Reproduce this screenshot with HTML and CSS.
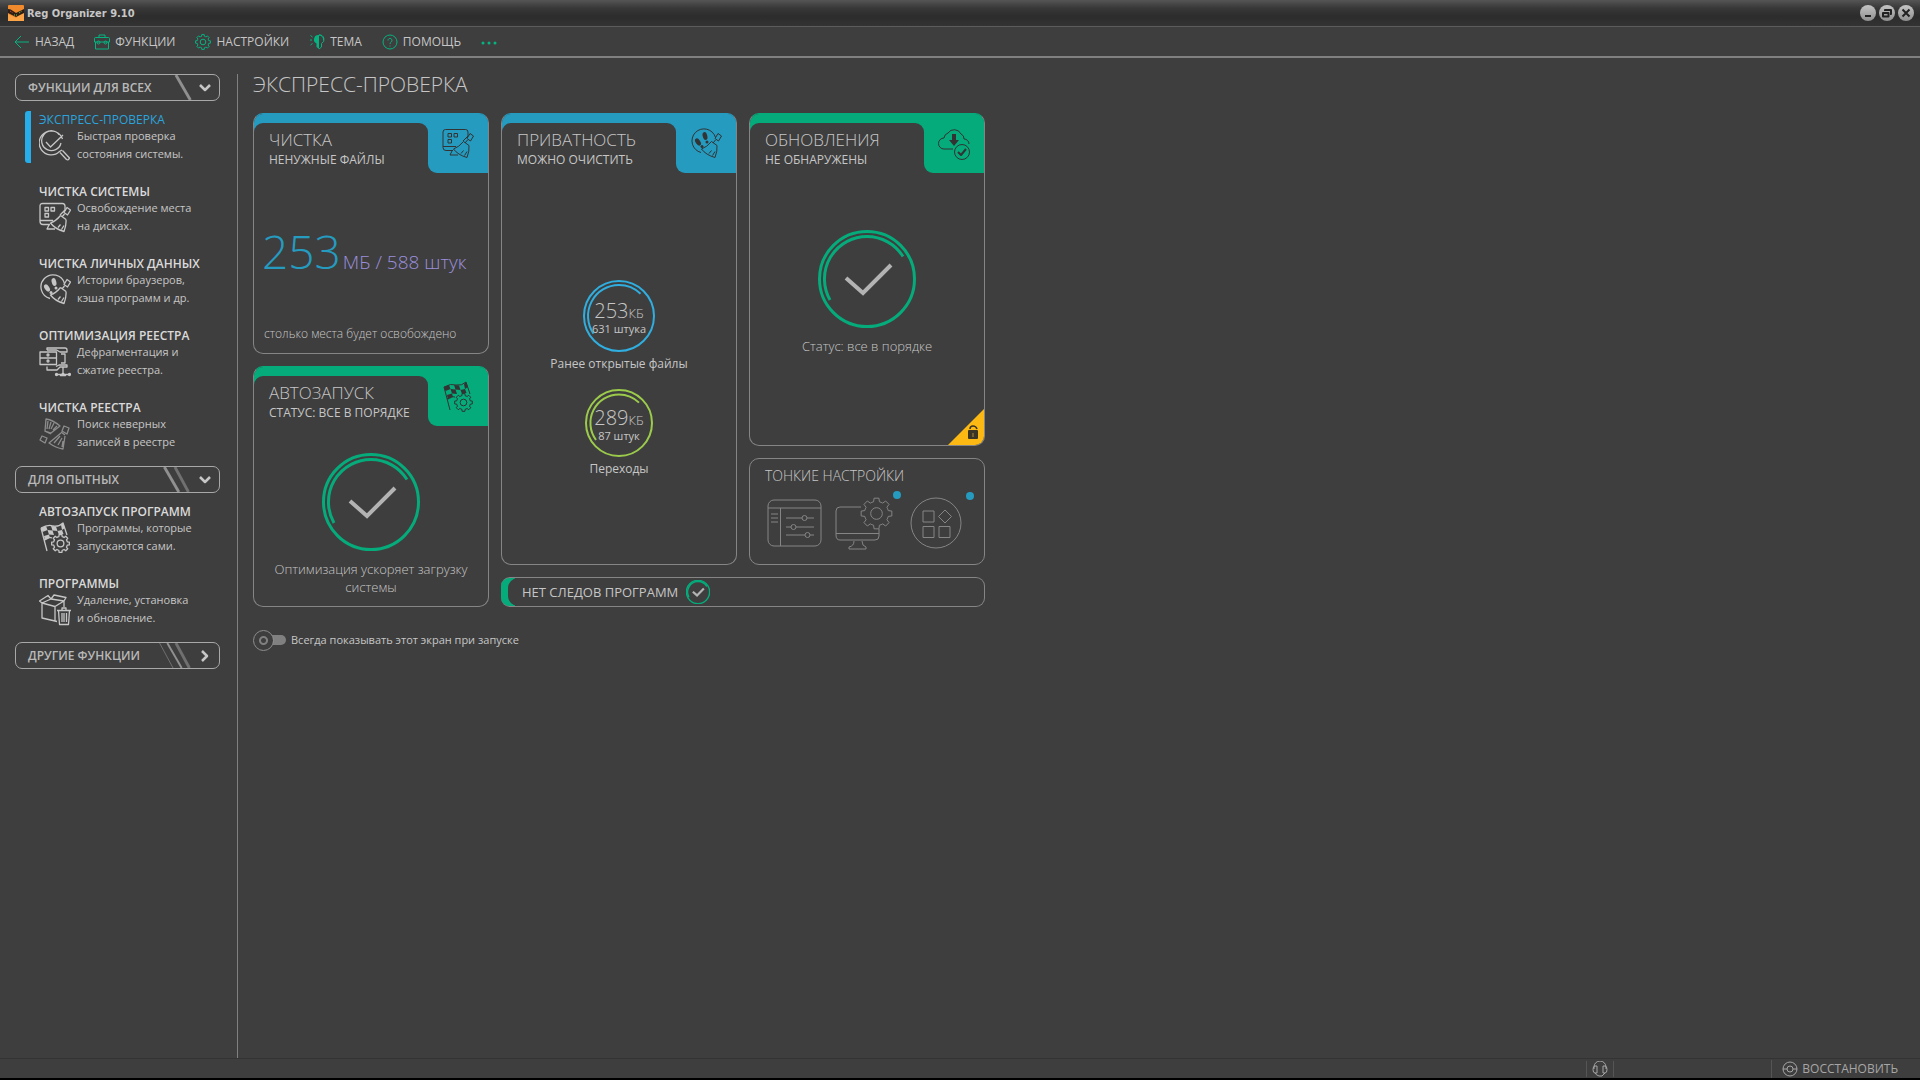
FILE: index.html
```html
<!DOCTYPE html>
<html lang="ru">
<head>
    <meta charset="UTF-8">
    <title>Reg Organizer 9.10</title>
    <link rel="stylesheet" href="styles.css">
</head>
<body>
    <svg class="sprite" aria-hidden="true">
        <symbol id="gear" viewBox="-17 -17 34 34">
            <path class="even" d="M12.1-3L15.8-2.5V2.5L12.1 3A12.5 12.5 0 0 1 10.7 6.4L12.9 9.4L9.4 12.9L6.4 10.7A12.5 12.5 0 0 1 3 12.1L2.5 15.8H-2.5L-3 12.1A12.5 12.5 0 0 1-6.4 10.7L-9.4 12.9L-12.9 9.4L-10.7 6.4A12.5 12.5 0 0 1-12.1 3L-15.8 2.5V-2.5L-12.1-3A12.5 12.5 0 0 1-10.7-6.4L-12.9-9.4L-9.4-12.9L-6.4-10.7A12.5 12.5 0 0 1-3-12.1L-2.5-15.8H2.5L3-12.1A12.5 12.5 0 0 1 6.4-10.7L9.4-12.9L12.9-9.4L10.7-6.4A12.5 12.5 0 0 1 12.1-3Z"/>
            <circle class="even" r="6"/>
        </symbol>
        <symbol id="broom" viewBox="0 0 32 32">
            <path d="M28 5.500L31.500 8L28.500 13L25 10.500ZM25.500 12L23 15M21.500 13.500L27 17.500M21.500 13.500Q17 19 11.500 21Q16 27 25 29.500Q27.500 23 27 17.500M19 25.500L21.500 22.500M22.500 27.500L25 23.500"/>
        </symbol>
        <symbol id="disk" viewBox="0 0 32 32">
            <path d="M21 13L26 8V4Q26 1.500 23.500 1.500H3.500Q1 1.500 1 4V19.500Q1 22.500 4 22.500H11M1 18.500H14M10 23L8 27H16"/>
            <path d="M6 5.500H9.500V9H6ZM12 5.500H15.500V9H12ZM6 11.500H9.500V15H6Z"/>
            <use href="#broom"/>
        </symbol>
        <symbol id="steps" viewBox="0 0 32 32">
            <path d="M11 24.500A12 12 0 1 1 25.500 9.500"/>
            <g class="solid">
                <ellipse cx="15" cy="8" rx="2.300" ry="4" transform="rotate(-15 15 8)"/>
                <ellipse cx="17" cy="14" rx="1.500" ry="1.500"/>
                <ellipse cx="8" cy="14" rx="2.300" ry="4" transform="rotate(-35 8 14)"/>
                <ellipse cx="12" cy="18.500" rx="1.500" ry="1.500"/>
            </g>
            <use href="#broom"/>
        </symbol>
        <symbol id="flag" viewBox="0 0 32 32">
            <path d="M2 6L8 29M2 6Q9 2 14 4Q20 5 24 1L28 13M5 18Q9 14 13 16"/>
            <g class="solid">
                <path d="M2 6L7 4L8.500 8L3.500 10ZM12 4L17 4.500L18.500 9L13.500 8.500ZM22 3L24 1L26 6L23 8ZM8.500 8L13.500 8.500L15 13L10 12.500ZM18.500 9L23 8L24.500 12L20 13ZM5 14L10 12.500L11 16L6 18.500Z"/>
            </g>
            <use href="#gear" x="12" y="12" width="19" height="19"/>
        </symbol>
        <symbol id="ring" viewBox="-49 -49 98 98">
            <circle r="47.500"/>
            <path d="M-37 21A42.500 42.500 0 0 1 0-42.500A42.500 42.500 0 0 1 36-22.500"/>
        </symbol>
        <symbol id="check" viewBox="-49 -49 98 98">
            <path d="M-21-1L-4 14L24-14"/>
        </symbol>
        <symbol id="chevron" viewBox="0 0 14 14">
            <path d="M2 4L7 9L12 4"/>
        </symbol>
    </svg>

    <header class="titlebar">
        <svg class="logo" viewBox="0 0 16 16">
            <rect class="logo-bg" width="16" height="16" rx="1"/>
            <path class="logo-light" d="M0 9L8 13L16 6V16H0Z"/>
            <path class="logo-band" d="M0 4Q3 4 5 6L8 8L16 4V8L8 12L0 8Z"/>
            <path class="logo-red" d="M2 6L5 8"/>
            <path class="logo-green" d="M6 10L9 10M11 8L14 6"/>
        </svg>
        <span class="app-name">Reg Organizer 9.10</span>
        <div class="window-buttons">
            <button type="button" aria-label="Свернуть"><svg viewBox="0 0 16 16"><path d="M5 11H11"/></svg></button>
            <button type="button" aria-label="Восстановить размер"><svg viewBox="0 0 16 16"><path d="M6 6V5H12V9H11M4 8H9.500V11.500H4Z"/></svg></button>
            <button type="button" aria-label="Закрыть"><svg viewBox="0 0 16 16"><path d="M4.500 4.500L11.500 11.500M11.500 4.500L4.500 11.500"/></svg></button>
        </div>
    </header>

    <div class="menu">
        <button type="button"><svg viewBox="0 0 16 16"><path d="M15 8H1M7 2L1 8L7 14"/></svg>НАЗАД</button>
        <button type="button"><svg viewBox="0 0 16 16"><path d="M1.500 3.500H14.500Q15.500 3.500 15.500 4.500V8H.500V4.500Q.500 3.500 1.500 3.500ZM5 3.500V1H11V3.500M1.500 8V15H14.500V8"/><circle cx="4.500" cy="8.500" r="1.500"/><circle cx="11.500" cy="8.500" r="1.500"/></svg>ФУНКЦИИ</button>
        <button type="button"><svg viewBox="0 0 16 16"><use href="#gear"/></svg>НАСТРОЙКИ</button>
        <button type="button"><svg viewBox="0 0 16 16"><path d="M10 1A4.500 4.500 0 0 1 12.500 9.500V13L10 15"/><path class="solid" d="M10 1A4.500 4.500 0 0 0 7.500 9.500V13L10 15Z"/><path d="M1 6H3M1.500 1.500L3.500 3M1.500 11L3.500 9.500"/><path d="M10 1A4.500 4.500 0 0 1 14.500 6"/></svg>ТЕМА</button>
        <button type="button"><svg viewBox="0 0 16 16"><circle cx="8" cy="8" r="7"/><path d="M6 6.500A2 2 0 1 1 9.200 8Q8 8.700 8 10M8 11.500V12.500"/></svg>ПОМОЩЬ</button>
        <button type="button" aria-label="Ещё"><svg viewBox="0 0 16 16"><g class="solid"><circle cx="2" cy="9" r="1.500"/><circle cx="8" cy="9" r="1.500"/><circle cx="14" cy="9" r="1.500"/></g></svg></button>
    </div>

    <div class="workspace">
        <nav class="sidebar">
            <button type="button" class="group">ФУНКЦИИ ДЛЯ ВСЕХ
                <svg class="slashes" viewBox="0 0 40 26"><path class="thick" d="M22 0L37 26"/></svg>
                <svg class="arrow" viewBox="0 0 14 14"><use href="#chevron"/></svg>
            </button>
            <div class="group-items">
                <a href="#" class="item active">
                    <b>ЭКСПРЕСС-ПРОВЕРКА</b>
                    <svg viewBox="0 0 32 32"><path d="M23.500 9A12 12 0 1 0 20.500 21.500L23 20M20 4.500A9.800 9.800 0 1 0 22 13M7 12L11.500 17L24 5M21 22.500L27.500 29.500Q29.500 30.500 30.500 28L23.500 20.500"/></svg>
                    <span>Быстрая проверка<br>состояния системы.</span>
                </a>
                <a href="#" class="item">
                    <b>ЧИСТКА СИСТЕМЫ</b>
                    <svg viewBox="0 0 32 32"><use href="#disk"/></svg>
                    <span>Освобождение места<br>на дисках.</span>
                </a>
                <a href="#" class="item">
                    <b>ЧИСТКА ЛИЧНЫХ ДАННЫХ</b>
                    <svg viewBox="0 0 32 32"><use href="#steps"/></svg>
                    <span>Истории браузеров,<br>кэша программ и др.</span>
                </a>
                <a href="#" class="item">
                    <b>ОПТИМИЗАЦИЯ РЕЕСТРА</b>
                    <svg viewBox="0 0 32 32"><path d="M1 6H17.500V18.500H1ZM1 12H17.500M8 4V2H26Q28 2 28 4V6H21L17.500 4H8M8 20.500V24H18L21 21H28V19H20L17 20.500M22 8H26V17H22M24 21V27L21.500 29.500H26.500L24 27M17 28.500H31"/><circle cx="9" cy="9" r="1"/><circle cx="9" cy="15" r="1"/><circle cx="17.500" cy="28.500" r="1"/><circle cx="30.500" cy="28.500" r="1"/></svg>
                    <span>Дефрагментация и<br>сжатие реестра.</span>
                </a>
                <a href="#" class="item">
                    <b>ЧИСТКА РЕЕСТРА</b>
                    <svg class="dim" viewBox="0 0 32 32"><path d="M7 1L6 13L12 15L21 8Q14 2 7 1ZM9 3L8 11M12 4L10 11M15 5L12 11M18 8L14 12M5.500 13L12 16M25 8L30 10L28 16L23 13ZM22 14L26 17M22 15L10 25Q17 30 24 31L26 18M21 18L15 25M23 20L19 27M24 23L23 29M3 18L8 20L6 25L1 22Z"/></svg>
                    <span>Поиск неверных<br>записей в реестре</span>
                </a>
            </div>
            <button type="button" class="group">ДЛЯ ОПЫТНЫХ
                <svg class="slashes" viewBox="0 0 40 26"><path class="thick" d="M10 0L25 26"/><path class="thick faded" d="M21 0L35 26"/></svg>
                <svg class="arrow" viewBox="0 0 14 14"><use href="#chevron"/></svg>
            </button>
            <div class="group-items">
                <a href="#" class="item">
                    <b>АВТОЗАПУСК ПРОГРАММ</b>
                    <svg viewBox="0 0 32 32"><use href="#flag"/></svg>
                    <span>Программы, которые<br>запускаются сами.</span>
                </a>
                <a href="#" class="item">
                    <b>ПРОГРАММЫ</b>
                    <svg viewBox="0 0 32 32"><path d="M18 27.500L16 27L3 24V9L16 12.500V27M16 12.500L25 7M3 9L12 5L25 7V13M3 9L.500 7L9 1.500L12 5M12 5L15 1L27 3.500L25 7M16 12.500L20 10M18 16.500H32M19.500 16.500L20.500 30.500H29.500L30.500 16.500M23 16V14H27V16M23 19V28M25 19V28M27.500 19V28"/></svg>
                    <span>Удаление, установка<br>и обновление.</span>
                </a>
            </div>
            <button type="button" class="group">ДРУГИЕ ФУНКЦИИ
                <svg class="slashes" viewBox="0 0 40 26"><path class="faded" d="M5 0L19 26"/><path class="medium" d="M13 0L28 26"/><path class="thick faded" d="M22 0L36 26"/></svg>
                <svg class="arrow right" viewBox="0 0 14 14"><use href="#chevron"/></svg>
            </button>
        </nav>

        <main>
            <h1>ЭКСПРЕСС-ПРОВЕРКА</h1>
            <div class="board">
                <div class="col">
                    <section class="card blue half">
                        <div class="card-head">
                            <div class="card-title"><h2>ЧИСТКА</h2><p>НЕНУЖНЫЕ ФАЙЛЫ</p></div>
                            <div class="card-icon"><svg viewBox="0 0 32 32"><use href="#disk"/></svg></div>
                        </div>
                        <p class="total"><strong>253</strong>МБ / 588 штук</p>
                        <p class="note">столько места будет освобождено</p>
                    </section>
                    <section class="card green half">
                        <div class="card-head">
                            <div class="card-title"><h2>АВТОЗАПУСК</h2><p>СТАТУС: ВСЕ В ПОРЯДКЕ</p></div>
                            <div class="card-icon"><svg viewBox="0 0 32 32"><use href="#flag"/></svg></div>
                        </div>
                        <div class="status">
                            <svg class="ok" viewBox="0 0 98 98"><use href="#ring"/><use class="tick" href="#check"/></svg>
                            <p>Оптимизация ускоряет загрузку системы</p>
                        </div>
                    </section>
                </div>
                <div class="rest">
                    <section class="card blue privacy">
                        <div class="card-head">
                            <div class="card-title"><h2>ПРИВАТНОСТЬ</h2><p>МОЖНО ОЧИСТИТЬ</p></div>
                            <div class="card-icon"><svg viewBox="0 0 32 32"><use href="#steps"/></svg></div>
                        </div>
                        <div class="meters">
                            <div class="meter sky">
                                <svg viewBox="-36 -36 72 72"><circle r="35"/><path d="M-25.500 17.600A31 31 0 0 1 0-31A31 31 0 0 1 21.500-22.300"/></svg>
                                <p><span>253<small>КБ</small></span><em>631 штука</em></p>
                            </div>
                            <p class="meter-name">Ранее открытые файлы</p>
                            <div class="meter lime">
                                <svg viewBox="-34 -34 68 68"><circle r="33"/><path d="M-23 17A28.600 28.600 0 0 1 0-28.600A28.600 28.600 0 0 1 20-20.400"/></svg>
                                <p><span>289<small>КБ</small></span><em>87 штук</em></p>
                            </div>
                            <p class="meter-name">Переходы</p>
                        </div>
                    </section>
                    <div class="col">
                        <section class="card green updates">
                            <div class="card-head">
                                <div class="card-title"><h2>ОБНОВЛЕНИЯ</h2><p>НЕ ОБНАРУЖЕНЫ</p></div>
                                <div class="card-icon"><svg viewBox="0 0 32 32"><path d="M15 21H6A5.500 5.500 0 0 1 6 10A6 6 0 0 1 10 5A7.500 7.500 0 0 1 23 6A5 5 0 0 1 26 11A5 5 0 0 1 31 16"/><circle cx="24" cy="24" r="7.500"/><path class="medium" d="M20 24L23 27L28 21"/><path class="solid" d="M14 6H18V12H21L16 18L11 12H14Z"/></svg></div>
                            </div>
                            <div class="status">
                                <svg class="ok" viewBox="0 0 98 98"><use href="#ring"/><use class="tick" href="#check"/></svg>
                                <p>Статус: все в порядке</p>
                            </div>
                            <svg class="lock" viewBox="0 0 36 36"><path class="corner" d="M36 0V36H0Z"/><path class="shackle" d="M22 20Q22 17 25 17Q28 17 29 20"/><rect x="20" y="21" width="10" height="9" rx="1"/><path class="key" d="M25 24V28"/></svg>
                        </section>
                        <section class="card tweaks">
                            <h2>ТОНКИЕ НАСТРОЙКИ</h2>
                            <div class="tools">
                                <button type="button" aria-label="Параметры"><svg viewBox="0 0 55 48"><rect x="1" y="1" width="53" height="46" rx="6"/><path d="M1 9H54M13.500 9V47M4 15H11M4 19H11M4 23H11M19 19H35M40 19H47M19 28H24M29 28H47M19 36H38M43 36H47"/><circle cx="37.500" cy="19" r="2.500"/><circle cx="26.500" cy="28" r="2.500"/><circle cx="40.500" cy="36" r="2.500"/></svg></button>
                                <button type="button" class="marked" aria-label="Система"><svg viewBox="0 0 58 54"><path d="M26 11H5Q1 11 1 15V39Q1 44 5 44H40Q44 44 44 40V33M1 37.500H44M19 45Q19 50 14 51V53H31V51Q27 50 27 45"/><use href="#gear" x="25" y="1" width="33" height="33"/></svg></button>
                                <button type="button" class="marked" aria-label="Приложения"><svg viewBox="0 0 52 52"><circle cx="26" cy="26" r="25"/><path d="M13 14H24V25H13ZM28.500 19.500L35 13L41.500 19.500L35 26ZM13 29.500H24V40.500H13ZM29 29.500H40V40.500H29Z"/></svg></button>
                            </div>
                        </section>
                    </div>
                    <section class="traces">
                        <p>НЕТ СЛЕДОВ ПРОГРАММ</p>
                        <svg class="ok" viewBox="0 0 98 98"><use href="#ring"/><use class="tick" href="#check"/></svg>
                    </section>
                </div>
            </div>
            <label class="startup"><input type="checkbox">Всегда показывать этот экран при запуске</label>
        </main>
    </div>

    <footer class="statusbar">
        <button type="button" class="support" aria-label="Поддержка"><svg viewBox="0 0 16 16"><path d="M2 8V6A6 6 0 0 1 14 6V8M5 5V12H3A2 3.500 0 0 1 3 5ZM11 5V12H13A2 3.500 0 0 0 13 5ZM3 12Q4 14 7 15H10L13 12"/></svg></button>
        <div class="blank"></div>
        <button type="button" class="restore"><svg viewBox="0 0 16 16"><circle cx="8" cy="8" r="7"/><circle cx="8" cy="8" r="3"/><path d="M1 8H5M11 8H15"/></svg>ВОССТАНОВИТЬ</button>
    </footer>
</body>
</html>
```
FILE: styles.css
```css
*{margin: 0;padding: 0;box-sizing: border-box;}
body{min-height: 100vh;display: flex;flex-direction: column;background: #3e3e3e;border-bottom: 2px solid #000;font-family: "Open Sans","Noto Sans",sans-serif;font-size: 12px;color: #c6c6c6;}
button{font: inherit;color: inherit;background: none;border: 0;cursor: pointer;}
a{color: inherit;text-decoration: none;}
svg{display: block;flex: none;fill: none;stroke: currentColor;stroke-linejoin: round;}
svg .solid{fill: currentColor;stroke: none;}
svg .medium{stroke-width: 2;}
.even{vector-effect: non-scaling-stroke;}
.sprite{position: absolute;width: 0;height: 0;}

/* window frame */
.titlebar{display: flex;align-items: center;gap: 3px;height: 27px;padding: 0 6px 0 8px;background: linear-gradient(#555 0,#383838 8px,#2c2c2c 16px,#333 100%);border-bottom: 1px solid #5c5c5c;}
.logo{width: 16px;height: 16px;}
.logo-bg{fill: #f08a2c;stroke: none;}
.logo-light{fill: #fba447;stroke: none;}
.logo-band{fill: #2c1e14;stroke: none;}
.logo-red{stroke: #e0483a;stroke-dasharray: 1 1;}
.logo-green{stroke: #7cc143;stroke-dasharray: 1 1;}
.app-name{font-family: "DejaVu Sans Condensed","DejaVu Sans",sans-serif;font-size: 11px;font-weight: bold;}
.window-buttons{display: flex;gap: 3px;margin-left: auto;}
.window-buttons button{width: 16px;height: 16px;border-radius: 50%;background: linear-gradient(#c4c4c4,#8f8f8f);color: #222;}
.window-buttons svg{width: 16px;height: 16px;stroke-width: 2;}
.menu{display: flex;align-items: center;gap: 20px;height: 31px;padding: 0 14px;border-bottom: 2px solid #808080;}
.menu button{display: flex;align-items: center;gap: 5px;}
.menu svg{width: 16px;height: 16px;color: #05b381;}

/* sidebar */
.workspace{flex: 1;display: flex;gap: 15px;padding-top: 16px;}
.sidebar{flex: none;width: 238px;padding: 0 17px 0 15px;border-right: 1px solid #808080;}
.group{display: flex;align-items: center;width: 100%;height: 27px;padding: 0 7px 0 12px;border: 1px solid #a8a8a8;border-radius: 7px;font-weight: 600;color: #b9b9b9;}
.slashes{width: 40px;height: 25px;margin-left: auto;stroke: #909090;}
.slashes .thick{stroke-width: 3;}
.slashes .faded{stroke: #707070;}
.arrow{width: 14px;height: 14px;margin-left: 4px;stroke-width: 2.5;color: #c6c6c6;}
.arrow.right{transform: rotate(-90deg);}
.group-items{display: flex;flex-direction: column;gap: 20px;padding: 10px 0 15px 10px;}
.item{display: grid;grid-template-columns: 32px 1fr;column-gap: 6px;padding-left: 14px;line-height: 18px;white-space: nowrap;height: 52px;font-size: 11px;}
.item b{grid-column: 1 / 3;padding-top: 2px;line-height: 14px;font-size: 12px;font-weight: 600;color: #dadada;}
.item svg{width: 32px;height: 32px;margin-top: 3px;stroke-width: 1.3;}
.item svg.dim{color: #8d8d8d;}
.item.active{border-left: 6px solid #25aeea;border-radius: 3px;padding-left: 8px;}
.item.active b{color: #2ba3dc;font-weight: 400;}

/* main area */
h1{font-size: 21px;line-height: 20px;font-weight: 300;}
h2{font-size: 17px;line-height: 22px;font-weight: 300;}
.board{display: flex;align-items: flex-start;gap: 12px;margin-top: 19px;}
.col{display: flex;flex-direction: column;gap: 12px;width: 236px;}
.rest{display: grid;grid-template-columns: 236px 236px;gap: 12px;}
.card{position: relative;display: flex;flex-direction: column;border: 1px solid #858585;border-radius: 10px;overflow: hidden;}
.card.half{min-height: 241px;}
.blue{--tab: #259bc0;border-top-color: #259bc0;}
.green{--tab: #05ab7a;border-top-color: #05ab7a;}
.card-head{display: flex;height: 59px;background: linear-gradient(var(--tab) 20px,transparent 20px);}
.card-title{flex: 1;margin-top: 9px;padding: 6px 0 0 15px;background: #3e3e3e;border-radius: 9px 9px 0 0;white-space: nowrap;}
.card-title p{line-height: 18px;}
.card-icon{display: flex;align-items: center;justify-content: center;width: 60px;background: var(--tab);border-bottom-left-radius: 9px;color: #333;}
.card-icon svg{width: 32px;height: 32px;}
.total{display: flex;align-items: baseline;padding: 43px 0 0 8px;font-size: 19px;line-height: 70px;font-weight: 300;color: #9b8fdc;white-space: nowrap;}
.total strong{margin-right: 2px;font-size: 46px;font-weight: 300;color: #259bc0;}
.note{margin-top: auto;padding: 0 10px 10px;line-height: 18px;font-weight: 300;white-space: nowrap;}
.ok{width: 98px;height: 98px;stroke-width: 3;color: #05ab7a;}
.tick{color: #b3b3b3;stroke-width: 4;stroke-linejoin: miter;}
.status{display: flex;flex-direction: column;align-items: center;gap: 9px;padding: 27px 20px 0;font-size: 13px;line-height: 18px;font-weight: 300;text-align: center;}
.updates{min-height: 333px;}
.updates .status{padding-top: 57px;}
.lock{position: absolute;right: 0;bottom: 0;width: 36px;height: 36px;}
.lock .corner{fill: #fdb913;stroke: none;}
.lock rect{fill: #3a3426;stroke: none;}
.lock .shackle{stroke: #3a3426;stroke-width: 1.5;}
.lock .key{stroke: #a98a3a;}
.meters{display: flex;flex-direction: column;align-items: center;padding-top: 107px;}
.meter{display: grid;place-items: center;}
.meter svg,.meter p{grid-area: 1 / 1;}
.meter svg{stroke-width: 2;}
.meter p{display: flex;flex-direction: column;align-items: center;padding-top: 6px;font-size: 11px;line-height: 14px;}
.meter span{font-size: 20px;line-height: 18px;font-weight: 300;}
.meter small{font-size: 13px;}
.meter em{font-style: normal;}
.sky svg{width: 72px;color: #30aee0;}
.lime svg{width: 68px;color: #9ccb4c;}
.meter-name{line-height: 24px;}
.meter-name + .meter{margin-top: 13px;}
.tweaks{min-height: 107px;padding: 6px 14px 0 15px;}
.tweaks h2{font-size: 14px;}
.tools{display: flex;align-items: center;gap: 13px;padding: 9px 0 0 2px;}
.tools button{position: relative;color: #858585;}
.tools button:nth-child(1) svg{width: 55px;}
.tools button:nth-child(2) svg{width: 58px;}
.tools button:nth-child(3){margin-left: 4px;}
.tools button:nth-child(3) svg{width: 52px;}
.marked::after{content: "";position: absolute;top: -5px;right: -8px;width: 8px;height: 8px;border-radius: 50%;background: #259bc0;}
.tools button:nth-child(3)::after{right: -12px;}
.traces{grid-column: 1 / 3;display: flex;align-items: center;gap: 8px;height: 30px;padding-left: 7px;border: 1px solid #858585;border-left: 0;border-radius: 9px;background: linear-gradient(90deg,#05ab7a 14px,transparent 14px);overflow: hidden;}
.traces p{height: 28px;padding-left: 14px;border-radius: 10px 0 0 10px;background: #3e3e3e;line-height: 28px;font-size: 13px;}
.traces .ok{width: 24px;height: 24px;stroke-width: 6;}
.traces .tick{stroke-width: 9;}
.startup{display: flex;align-items: center;gap: 5px;margin-top: 23px;line-height: 20px;font-size: 11px;}
.startup input{appearance: none;position: relative;width: 33px;height: 20px;}
.startup input::before{content: "";position: absolute;left: 12px;top: 5px;width: 21px;height: 10px;border-radius: 5px;background: #808080;}
.startup input::after{content: "";position: absolute;left: 0;top: 0;width: 19px;height: 19px;border-radius: 50%;border: 1px solid #8d8d8d;background: radial-gradient(circle,#3e3e3e 2px,#808080 3px,#808080 4px,#3e3e3e 5px);}

/* status bar */
.statusbar{display: flex;justify-content: flex-end;align-items: center;height: 20px;border-top: 1px solid #333;color: #a6a6a6;}
.statusbar svg{width: 16px;height: 16px;}
.support{padding: 0 5px;border-left: 1px solid #555;border-right: 1px solid #555;}
.blank{width: 157px;}
.restore{display: flex;align-items: center;gap: 4px;padding: 0 22px 0 10px;border-left: 1px solid #555;line-height: 18px;}
```
